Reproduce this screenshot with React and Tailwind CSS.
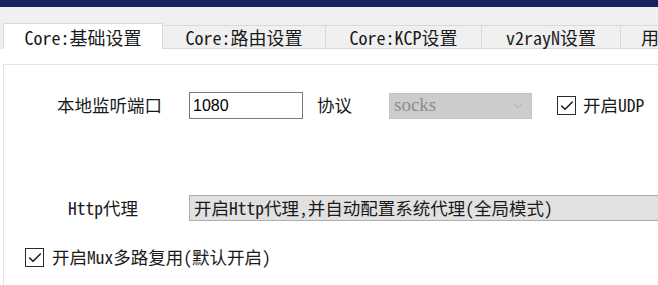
import { Check, ChevronDown } from "lucide-react";

const tabs = [
  { label: "Core:路由设置", w: "w-[163px]" },
  { label: "Core:KCP设置", w: "w-[156px]" },
  { label: "v2rayN设置", w: "w-[139px]" },
  { label: "用户PAC设置", w: "w-[140px]" },
];

function CheckBox() {
  return (
    <div className="w-[19px] h-[19px] border border-[#2a2a2a] bg-white flex items-center justify-center shrink-0">
      <Check size={16} strokeWidth={2.25} className="text-[#1a1a1a]" />
    </div>
  );
}

function App() {
  return (
    <div className="w-[658px] h-[285px] overflow-hidden bg-white text-[17.5px] text-[#1a1a1a] font-['Noto_Sans_Mono_CJK_SC','Noto_Sans_CJK_SC',monospace]">
      <div className="h-[7px] bg-[#1b2061]" />

      <div className="h-[42px] bg-[#f0f0f0] flex items-end pl-[3px] whitespace-nowrap overflow-hidden text-[18px]">
        <div className="w-[160px] shrink-0 h-[26px] bg-white border border-b-0 border-[#d9d9d9] flex items-center justify-center leading-none">
          Core:基础设置
        </div>
        {tabs.map((t) => (
          <div
            key={t.label}
            className={`${t.w} shrink-0 h-[24px] bg-[#f0f0f0] border-t border-r border-b border-[#d9d9d9] flex items-center justify-center leading-none`}
          >
            {t.label}
          </div>
        ))}
      </div>

      <div className="pt-[15px] pl-[3px] h-[236px]">
        <div className="h-full border-t border-l border-[#e3e3e3] flex flex-col whitespace-nowrap overflow-hidden">
          <div className="mt-[27px] h-[27px] flex items-center">
            <div className="ml-[53px] w-[132px] shrink-0">本地监听端口</div>
            <div className="w-[114px] shrink-0 h-[27px] border border-[#7a7a7a] flex items-center pl-[3px] font-['Liberation_Sans',sans-serif] text-[16px] text-black">
              1080
            </div>
            <div className="ml-[14px] w-[72px] shrink-0">协议</div>
            <div className="w-[143px] shrink-0 h-[26px] bg-[#cccccc] border border-[#c4c4c4] flex items-center justify-between pl-[4px] pr-[6px]">
              <span className="font-['Liberation_Serif',serif] text-[19px] text-[#8c8c8c]">socks</span>
              <ChevronDown size={14} strokeWidth={1.5} className="text-[#a8a8a8]" />
            </div>
            <div className="ml-[25px] shrink-0">
              <CheckBox />
            </div>
            <div className="ml-[7px] shrink-0">开启UDP</div>
          </div>

          <div className="mt-[76px] h-[26px] flex items-center">
            <div className="ml-[64px] w-[121px] shrink-0">Http代理</div>
            <div className="w-[480px] shrink-0 h-[26px] bg-[#e1e1e1] border border-[#adadad] flex items-center pl-[4px]">
              开启Http代理,并自动配置系统代理(全局模式)
            </div>
          </div>

          <div className="mt-[27px] h-[19px] flex items-center">
            <div className="ml-[21px] shrink-0">
              <CheckBox />
            </div>
            <div className="ml-[8px] shrink-0">开启Mux多路复用(默认开启)</div>
          </div>
        </div>
      </div>
    </div>
  );
}

export default App;
